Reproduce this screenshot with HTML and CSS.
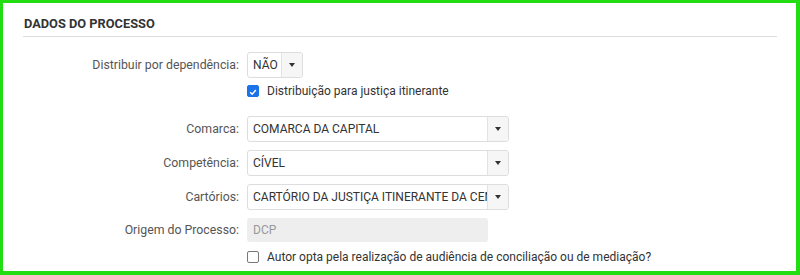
FILE: index.html
```html
<!DOCTYPE html>
<html lang="pt">
<head>
<meta charset="utf-8">
<link rel="stylesheet" href="styles.css">
</head>
<body>
<div class="frame">
  <div class="panel">
    <h3 class="title">DADOS DO PROCESSO</h3>
    <div class="form">
      <div class="row first">
        <label class="lbl">Distribuir por dependência:</label>
        <div class="ctl">
          <div class="select small"><span class="val">NÃO</span><span class="btn"><span class="caret"></span></span></div>
        </div>
      </div>
      <div class="row check-row">
        <div class="lbl"></div>
        <label class="check"><span class="box checked"><svg viewBox="0 0 12 12" width="12" height="12"><path d="M2.6 6.2 L5 8.6 L9.4 3.6" fill="none" stroke="#fff" stroke-width="1.8"/></svg></span>Distribuição para justiça itinerante</label>
      </div>
      <div class="spacer"></div>
      <div class="row">
        <label class="lbl">Comarca:</label>
        <div class="select wide"><span class="val">COMARCA DA CAPITAL</span><span class="btn"><span class="caret"></span></span></div>
      </div>
      <div class="row">
        <label class="lbl">Competência:</label>
        <div class="select wide"><span class="val">CÍVEL</span><span class="btn"><span class="caret"></span></span></div>
      </div>
      <div class="row">
        <label class="lbl">Cartórios:</label>
        <div class="select wide"><span class="val clip">CARTÓRIO DA JUSTIÇA ITINERANTE DA CENTRAL</span><span class="btn"><span class="caret"></span></span></div>
      </div>
      <div class="row">
        <label class="lbl">Origem do Processo:</label>
        <div class="input disabled">DCP</div>
      </div>
      <div class="row check-row last">
        <div class="lbl"></div>
        <label class="check"><span class="box"></span>Autor opta pela realização de audiência de conciliação ou de mediação?</label>
      </div>
    </div>
  </div>
</div>
</body>
</html>
```
FILE: styles.css
```css
html, body {
  margin: 0;
  padding: 0;
  background: #fff;
}
body {
  font-family: Roboto, "Liberation Sans", sans-serif;
  font-size: 12px;
  color: #555;
}
.frame {
  width: 800px;
  height: 275px;
  box-sizing: border-box;
  border: 3px solid #22dd11;
  border-right-width: 4px;
  border-bottom-width: 4px;
  overflow: hidden;
}
.panel {
  padding: 13px 19px 0 20px;
}
.title {
  margin: 0;
  font-size: 12.8px;
  font-weight: 700;
  color: #333;
  padding: 0 0 4px 1px;
  border-bottom: 1px solid #ddd;
  line-height: 16px;
}
.form {
  padding-top: 15px;
}
.row {
  display: grid;
  grid-template-columns: 216px auto;
  column-gap: 8px;
  align-items: center;
  margin-bottom: 8px;
}
.row.first { margin-bottom: 6px; }
.lbl {
  text-align: right;
  color: #555;
  font-size: 12.3px;
}
.ctl { display: flex; }
.select {
  display: flex;
  height: 26px;
  box-sizing: border-box;
  border: 1px solid #ddd;
  border-radius: 3px;
  background: #fff;
  color: #333;
  overflow: hidden;
}
.select.small { width: 56px; }
.select.wide { width: 262px; }
.val {
  flex: 1;
  padding: 0 5px;
  line-height: 24px;
  white-space: nowrap;
  overflow: hidden;
  font-size: 12px;
}
.btn {
  width: 20px;
  border-left: 1px solid #e3e3e3;
  background: #f6f6f6;
  display: flex;
  align-items: center;
  justify-content: center;
}
.caret {
  width: 0;
  height: 0;
  border-left: 3.5px solid transparent;
  border-right: 3.5px solid transparent;
  border-top: 4px solid #333;
}
.check-row { margin-bottom: 0; }
.check {
  display: flex;
  align-items: center;
  color: #333;
  height: 14px;
}
.box {
  width: 12px;
  height: 12px;
  box-sizing: border-box;
  border: 1px solid #777;
  border-radius: 2px;
  margin-right: 8px;
  display: flex;
  background: #fff;
}
.box.checked {
  background: #1a73e8;
  border-color: #1a73e8;
}
.spacer { height: 18px; }
.input {
  width: 241px;
  height: 24px;
  box-sizing: border-box;
  border-radius: 3px;
  padding: 0 6px;
  line-height: 24px;
}
.input.disabled {
  background: #eee;
  color: #999;
}
```
